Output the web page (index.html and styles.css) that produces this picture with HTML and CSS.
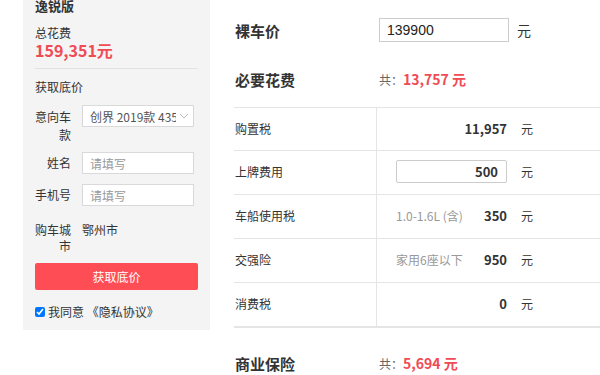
FILE: index.html
```html
<!DOCTYPE html>
<html lang="zh-CN">
<head>
    <meta charset="UTF-8">
    <meta name="viewport" content="width=device-width, initial-scale=1.0">
    <title>购车花费计算</title>
    <link rel="stylesheet" href="styles.css">
</head>
<body>
<div class="page">

    <!-- 左侧：询底价 -->
    <aside class="side">
        <div class="side-title">逸锐版</div>
        <div class="total-label">总花费</div>
        <div class="total-value">159,351元</div>

        <div class="ask">
            <div class="ask-title">获取底价</div>

            <div class="form-row row-car">
                <label class="form-label">意向车款</label>
                <div class="select">
                    <span class="select-text">创界 2019款 435T 自动两驱劲享版</span>
                    <svg class="select-arrow" width="10" height="6" viewBox="0 0 10 6">
                        <path d="M1 1 L5 5 L9 1" fill="none" stroke="#bbb" stroke-width="1"/>
                    </svg>
                </div>
            </div>

            <div class="form-row row-name">
                <label class="form-label single">姓名</label>
                <input class="text-input" type="text" placeholder="请填写">
            </div>

            <div class="form-row row-phone">
                <label class="form-label single">手机号</label>
                <input class="text-input" type="text" placeholder="请填写">
            </div>

            <div class="form-row row-city">
                <label class="form-label city">购车城市</label>
                <span class="city-name">鄂州市</span>
            </div>

            <button class="ask-btn">获取底价</button>

            <div class="agree">
                <input type="checkbox" checked>
                <span>我同意 《隐私协议》</span>
            </div>
        </div>
    </aside>

    <!-- 右侧：费用明细 -->
    <main class="calc">
        <div class="calc-row row-price">
            <div class="calc-title">裸车价</div>
            <input class="price-input" type="text" value="139900">
            <span class="unit-big">元</span>
        </div>

        <div class="calc-row row-must">
            <div class="calc-title">必要花费</div>
            <span class="sum-label">共：</span>
            <span class="sum-value">13,757 元</span>
        </div>

        <div class="fee-table">
            <div class="fee-row">
                <div class="fee-name">购置税</div>
                <div class="fee-val"><b>11,957</b></div>
                <span class="fee-unit">元</span>
            </div>
            <div class="fee-row">
                <div class="fee-name">上牌费用</div>
                <div class="fee-val"><input class="fee-input" type="text" value="500"></div>
                <span class="fee-unit">元</span>
            </div>
            <div class="fee-row">
                <div class="fee-name">车船使用税</div>
                <div class="fee-val"><span class="fee-note">1.0-1.6L (含)</span><b>350</b></div>
                <span class="fee-unit">元</span>
            </div>
            <div class="fee-row">
                <div class="fee-name">交强险</div>
                <div class="fee-val"><span class="fee-note">家用6座以下</span><b>950</b></div>
                <span class="fee-unit">元</span>
            </div>
            <div class="fee-row last">
                <div class="fee-name">消费税</div>
                <div class="fee-val"><b>0</b></div>
                <span class="fee-unit">元</span>
            </div>
        </div>

        <div class="calc-row row-insure">
            <div class="calc-title">商业保险</div>
            <span class="sum-label">共：</span>
            <span class="sum-value">5,694 元</span>
        </div>
    </main>

</div>
</body>
</html>
```

FILE: styles.css
```css
body {
    margin: 0;
    font-family: "Noto Sans CJK SC", "Noto Sans", sans-serif;
    color: #333;
    background: #fff;
    overflow: hidden;
}

.page {
    display: flex;
    align-items: flex-start;
    padding-left: 23px;
}

/* 左侧 */
.side {
    width: 163px;
    flex: none;
    background-color: #f4f4f4;
    padding: 0 12px 10px;
}

.side-title {
    font-size: 13px;
    font-weight: bold;
    line-height: 12px;
    height: 12px;
}

.total-label {
    margin-top: 13px;
    font-size: 12px;
    line-height: 16px;
}

.total-value {
    font-size: 16px;
    font-weight: bold;
    line-height: 18px;
    color: #f04b55;
}

.ask {
    margin-top: 9px;
    border-top: 1px solid #e2e2e2;
    padding-top: 10px;
}

.ask-title {
    font-size: 12px;
    line-height: 16px;
}

.form-row {
    display: flex;
    align-items: flex-start;
}

.row-car { margin-top: 10px; }
.row-name { margin-top: 8px; }
.row-phone { margin-top: 10px; }
.row-city { margin-top: 16px; }

.form-label {
    width: 36px;
    margin-right: 11px;
    flex: none;
    font-size: 12px;
    line-height: 18px;
    text-align: right;
    padding-top: 3px;
}

.form-label.single {
    line-height: 22px;
    padding-top: 0;
    white-space: nowrap;
}

.form-label.city {
    line-height: 16px;
    padding-top: 0;
}

.select {
    width: 110px;
    height: 20px;
    display: flex;
    align-items: center;
    background: #fff;
    border: 1px solid #d9d9d9;
}

.select-text {
    flex: 1;
    overflow: hidden;
    white-space: nowrap;
    font-size: 12px;
    color: #555;
    padding-left: 7px;
}

.select-arrow {
    flex: none;
    margin: 0 4px 0 3px;
}

.text-input {
    height: 20px;
    box-sizing: content-box;
    padding: 0 0 0 7px;
    width: 103px;
    border: 1px solid #d9d9d9;
    background: #fff;
    font-family: inherit;
    font-size: 12px;
    outline: none;
}

.text-input::placeholder {
    color: #999;
}

.city-name {
    font-size: 12px;
    line-height: 16px;
}

.ask-btn {
    display: block;
    width: 100%;
    height: 27px;
    margin-top: 9px;
    border: none;
    border-radius: 2px;
    background-color: #ff4d55;
    color: #fff;
    font-family: inherit;
    font-size: 12px;
}

.agree {
    display: flex;
    align-items: center;
    margin-top: 14px;
    font-size: 12px;
    line-height: 16px;
}

.agree input {
    width: 10px;
    height: 10px;
    margin: 0 3px 0 0;
}

/* 右侧 */
.calc {
    flex: 1;
    padding-left: 25px;
}

.calc-row {
    display: flex;
    align-items: center;
    height: 24px;
}

.row-price { margin-top: 18px; }
.row-must { margin-top: 25px; }
.row-insure { margin-top: 23px; }

.calc-title {
    width: 144px;
    flex: none;
    font-size: 15px;
    font-weight: bold;
}

.price-input {
    width: 121px;
    height: 22px;
    padding: 0 0 0 7px;
    border: 1px solid #ccc;
    font-family: "Liberation Sans", Arial, sans-serif;
    font-size: 14px;
    color: #222;
    outline: none;
}

.unit-big {
    margin-left: 8px;
    font-size: 14px;
}

.sum-label {
    font-size: 12px;
    color: #666;
}

.sum-value {
    font-size: 14px;
    font-weight: bold;
    color: #f04b55;
}

.fee-table {
    margin-top: 16px;
    margin-left: -1px;
    border-top: 1px solid #e5e5e5;
}

.fee-row {
    display: flex;
    align-items: center;
    height: 43px;
    border-bottom: 1px solid #e5e5e5;
}

.fee-row:first-child {
    height: 42px;
}

.fee-row.last {
    border-bottom-width: 2px;
}

.fee-name {
    width: 143px;
    height: 100%;
    flex: none;
    display: flex;
    align-items: center;
    padding-left: 1px;
    padding-bottom: 2px;
    box-sizing: border-box;
    border-right: 1px solid #e5e5e5;
    font-size: 12px;
}

.fee-val {
    width: 111px;
    margin-left: 19px;
    margin-bottom: 2px;
    display: flex;
    align-items: center;
    font-size: 13px;
}

.fee-val b {
    margin-left: auto;
}

.fee-note {
    font-size: 12px;
    color: #999;
}

.fee-input {
    width: 100%;
    height: 23px;
    box-sizing: border-box;
    padding: 0 8px 0 0;
    border: 1px solid #ccc;
    border-radius: 2px;
    text-align: right;
    font-family: inherit;
    font-size: 13px;
    font-weight: bold;
    color: #333;
    outline: none;
}

.fee-unit {
    margin-left: 14px;
    margin-bottom: 2px;
    font-size: 12px;
}
```
